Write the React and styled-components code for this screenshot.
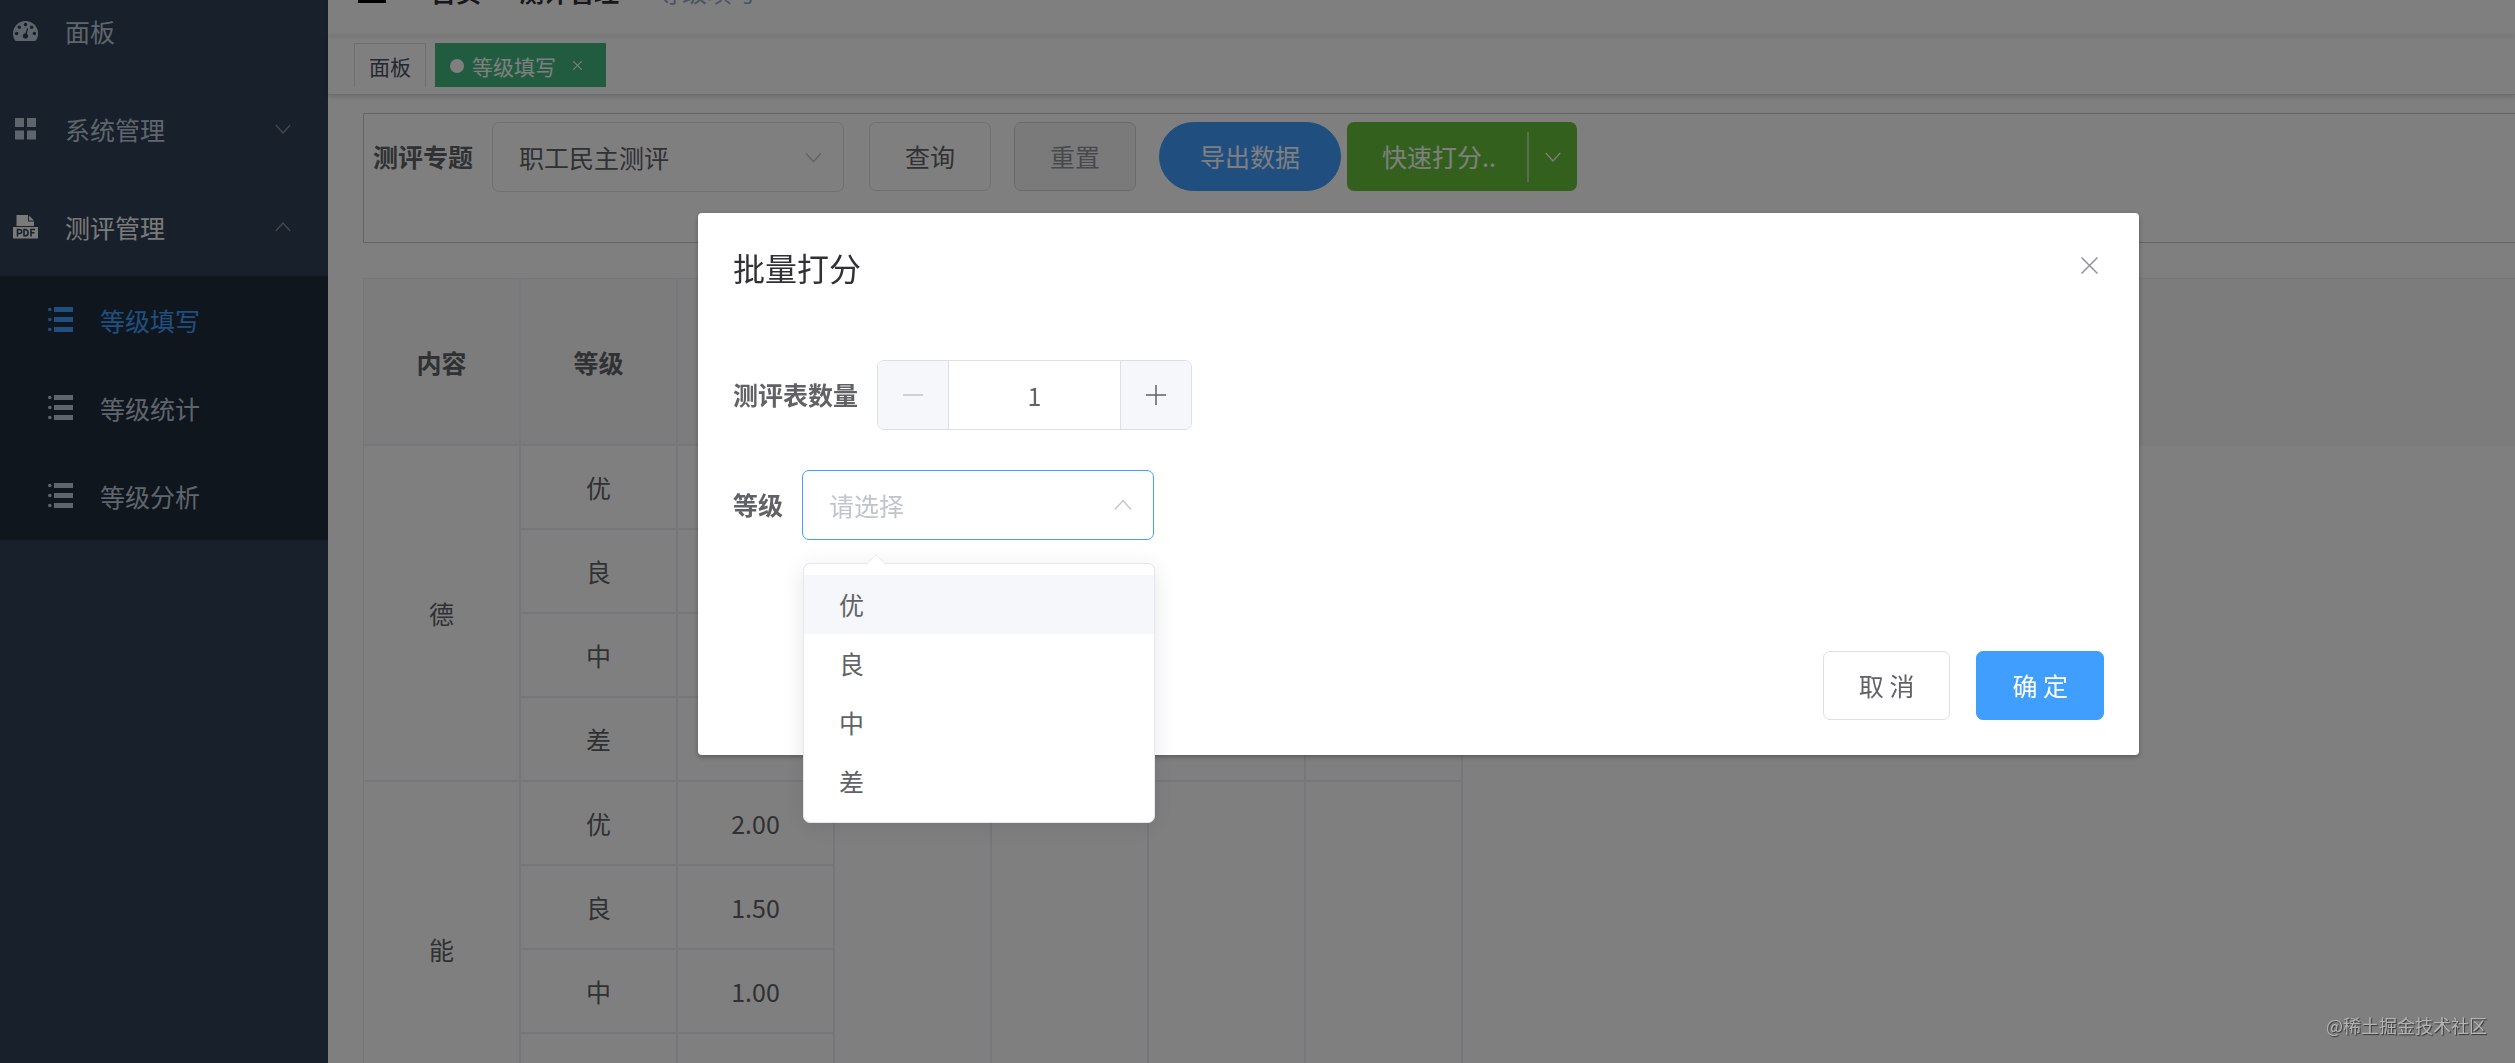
import React, { useState } from "react";
import styled, { createGlobalStyle } from "styled-components";

const GlobalStyle = createGlobalStyle`
  * {
    box-sizing: border-box;
  }
  body {
    margin: 0;
    overflow: hidden;
    color: #606266;
    background-color: #fff;
  }
  body, button, input, select {
    font-family: "Noto Sans CJK SC", sans-serif;
    font-size: 25px;
  }
`;

const subMenus = ["等级填写", "等级统计", "等级分析"];
const levels = ["优", "良", "中", "差"];
const tableGroups = [
  { name: "德", scores: ["", "", "", ""] },
  { name: "能", scores: ["2.00", "1.50", "1.00", ""] },
];

const DashboardIcon = () => (
  <svg width="25" height="20" viewBox="0 0 25 20" fill="currentColor">
    <path
      fillRule="evenodd"
      d="M12.5 0A12.5 12.5 0 0 0 0 12.5c0 2.5.7 4.7 1.9 6.7.3.5.8.8 1.4.8h18.4c.6 0 1.1-.3 1.4-.8A12.5 12.5 0 0 0 12.5 0z
      M3.6 10.7a1.8 1.8 0 1 1 0 3.6a1.8 1.8 0 1 1 0-3.6z
      M6.3 4.5a1.8 1.8 0 1 1 0 3.6a1.8 1.8 0 1 1 0-3.6z
      M12.5 1.8a1.8 1.8 0 1 1 0 3.6a1.8 1.8 0 1 1 0-3.6z
      M18.7 4.5a1.8 1.8 0 1 1 0 3.6a1.8 1.8 0 1 1 0-3.6z
      M21.4 10.7a1.8 1.8 0 1 1 0 3.6a1.8 1.8 0 1 1 0-3.6z
      M14 7.2l1.2.3-1.3 5.2a2.7 2.7 0 1 1-1.4-.4z"
    />
  </svg>
);

const ComponentIcon = () => (
  <svg width="25" height="22" viewBox="0 0 25 22" fill="currentColor">
    <path d="M2 0h9v9H2zM14 0h9v9h-9zM2 12.5h9v9H2zM14 12.5h9v9h-9z" />
  </svg>
);

const PdfIcon = () => (
  <svg width="25" height="24" viewBox="0 0 25 24">
    <path fill="currentColor" d="M3.5 0H15v6.5h6V11H3.5zM16 .5l5 5h-5zM0 12h25v11.5H0z" />
    <path
      fill="none"
      stroke="#304156"
      strokeWidth="1.6"
      d="M4.5 21.5v-7h2.200a1.900 1.900 0 0 1 0 4H4.500M11 14.500v6.300h1.200c3.800 0 3.800-6.300 0-6.300zM18 21.500v-7h4M18 17.800h3.500"
    />
  </svg>
);

const ListIcon = () => (
  <svg width="25" height="26" viewBox="0 0 25 26" fill="currentColor">
    <path d="M6 0h19v5H6zM6 10h19v5H6zM6 20h19v5H6z" />
    <circle cx="1.8" cy="2.5" r="1.8" />
    <circle cx="1.8" cy="12.5" r="1.8" />
    <circle cx="1.8" cy="22.5" r="1.8" />
  </svg>
);

const Arrow = ({ up, size = 20 }) => (
  <svg width={size} height={size} viewBox="0 0 20 20" fill="none" stroke="currentColor" strokeWidth="1.5">
    <path d={up ? "M1 15l9-10 9 10" : "M1 5l9 10 9-10"} />
  </svg>
);

const Close = ({ size = 17, stroke = 1.5 }) => (
  <svg width={size} height={size} viewBox="0 0 17 17" fill="none" stroke="currentColor" strokeWidth={stroke}>
    <path d="M.5.5l16 16M16.5.5l-16 16" />
  </svg>
);

function Sidebar() {
  return (
    <Aside>
      <Menu>
        <MenuItem href="#dashboard">
          <DashboardIcon />
          <span>面板</span>
        </MenuItem>
        <MenuItem href="#system">
          <ComponentIcon />
          <span>系统管理</span>
          <MenuArrow><Arrow size={16} /></MenuArrow>
        </MenuItem>
        <MenuItem href="#review" $open>
          <PdfIcon />
          <span>测评管理</span>
          <MenuArrow><Arrow up size={16} /></MenuArrow>
        </MenuItem>
      </Menu>
      <SubMenu>
        {subMenus.map((v, i) => (
          <SubMenuItem href="#level" key={i} $active={i === 0}>
            <ListIcon />
            <span>{v}</span>
          </SubMenuItem>
        ))}
      </SubMenu>
    </Aside>
  );
}

function Header() {
  return (
    <>
      <Navbar>
        <svg width="28" height="24" viewBox="0 0 28 24" fill="#000">
          <path d="M0 0h28v3H0zM0 10h28v3H0zM0 21h28v3H0z" />
        </svg>
        <Breadcrumb>
          <a href="#home">首页</a>
          <a href="#review">测评管理</a>
          <span>等级填写</span>
        </Breadcrumb>
      </Navbar>
      <TagsView>
        <Tag href="#dashboard">面板</Tag>
        <Tag href="#level" $active>
          <Dot />
          等级填写
          <TagClose><Close size={9} stroke={2} /></TagClose>
        </Tag>
      </TagsView>
    </>
  );
}

function Toolbar() {
  return (
    <FilterBox>
      <Label htmlFor="topic">测评专题</Label>
      <SelectWrap>
        <StyledSelect id="topic">
          <option>职工民主测评</option>
        </StyledSelect>
        <SelectArrow><Arrow size={17} /></SelectArrow>
      </SelectWrap>
      <Buttons>
        <Button>查询</Button>
        <Button $type="info">重置</Button>
        <ExportArea>
          <Button $type="primary" $round>导出数据</Button>
          <SplitButton>
            <SplitMain>快速打分..</SplitMain>
            <SplitToggle aria-label="更多"><Arrow size={16} /></SplitToggle>
          </SplitButton>
        </ExportArea>
      </Buttons>
    </FilterBox>
  );
}

function ScoreTable() {
  return (
    <TableWrap>
      <Table>
        <thead>
          <tr>
            <Th>内容</Th>
            <Th>等级</Th>
            <Th />
            <Th />
            <Th />
            <Th />
            <Th />
            <ThRest />
          </tr>
        </thead>
        <tbody>
          {tableGroups.map((group) =>
            levels.map((level, i) => (
              <tr key={group.name + level}>
                {i === 0 ? <Td rowSpan={4}>{group.name}</Td> : null}
                <Td>{level}</Td>
                <Td>{group.scores[i]}</Td>
                {i === 0 ? (
                  <>
                    <Td rowSpan={4} />
                    <Td rowSpan={4} />
                    <Td rowSpan={4} />
                    <Td rowSpan={4} />
                  </>
                ) : null}
              </tr>
            ))
          )}
        </tbody>
      </Table>
    </TableWrap>
  );
}

function ScoreDialog() {
  const [count, setCount] = useState(1);
  const [level, setLevel] = useState("");
  return (
    <Overlay>
      <Dialog role="dialog" aria-labelledby="dialog-title">
        <DialogHeader>
          <DialogTitle id="dialog-title">批量打分</DialogTitle>
          <CloseButton aria-label="关闭"><Close /></CloseButton>
        </DialogHeader>
        <DialogBody>
          <FormItem>
            <Label htmlFor="count">测评表数量</Label>
            <InputNumber>
              <StepButton aria-label="减少" disabled={count <= 1} onClick={() => setCount(count - 1)}>
                <svg width="20" height="20" viewBox="0 0 20 20" stroke="currentColor" strokeWidth="1.5">
                  <path d="M0 10h20" />
                </svg>
              </StepButton>
              <CountInput id="count" value={count} onChange={(e) => setCount(Number(e.target.value) || 1)} />
              <StepButton aria-label="增加" onClick={() => setCount(count + 1)}>
                <svg width="20" height="20" viewBox="0 0 20 20" stroke="currentColor" strokeWidth="1.5">
                  <path d="M0 10h20M10 0v20" />
                </svg>
              </StepButton>
            </InputNumber>
          </FormItem>
          <FormItem>
            <Label htmlFor="level">等级</Label>
            <SelectWrap>
              <StyledSelect id="level" value={level} onChange={(e) => setLevel(e.target.value)} $focus $empty={!level}>
                <option value="">请选择</option>
                {levels.map((v) => (
                  <option key={v}>{v}</option>
                ))}
              </StyledSelect>
              <SelectArrow><Arrow up size={18} /></SelectArrow>
              <Dropdown role="listbox">
                {levels.map((v, i) => (
                  <Option key={v} role="option" aria-selected={level === v} $hover={i === 0} onClick={() => setLevel(v)}>
                    {v}
                  </Option>
                ))}
              </Dropdown>
            </SelectWrap>
          </FormItem>
        </DialogBody>
        <DialogFooter>
          <Button>取 消</Button>
          <Button $type="primary">确 定</Button>
        </DialogFooter>
      </Dialog>
      <Watermark>@稀土掘金技术社区</Watermark>
    </Overlay>
  );
}

function App() {
  return (
    <>
      <GlobalStyle />
      <Layout>
        <Sidebar />
        <Main>
          <Header />
          <Content>
            <Toolbar />
            <ScoreTable />
          </Content>
        </Main>
      </Layout>
      <ScoreDialog />
    </>
  );
}

const Layout = styled.div`
  display: flex;
  height: 100vh;
  overflow: hidden;
`;

/* sidebar */
const Aside = styled.nav`
  width: 328px;
  flex-shrink: 0;
  background-color: #304156;
`;
const Menu = styled.div`
  margin-top: -18px;
`;
const MenuItem = styled.a`
  height: 98px;
  padding: 0 37px 0 13px;
  display: flex;
  align-items: center;
  gap: 27px;
  color: ${(props) => (props.$open ? "#f4f4f5" : "#bfcbd9")};
  text-decoration: none;
`;
const MenuArrow = styled.span`
  margin-left: auto;
  display: flex;
  color: #909399;
`;
const SubMenu = styled.div`
  background-color: #1f2d3d;
`;
const SubMenuItem = styled.a`
  height: 88px;
  padding-left: 48px;
  display: flex;
  align-items: center;
  gap: 27px;
  color: ${(props) => (props.$active ? "#409eff" : "#bfcbd9")};
  text-decoration: none;
`;

/* header */
const Main = styled.main`
  flex: 1;
  min-width: 0;
`;
const Navbar = styled.header`
  height: 90px;
  margin-top: -54px;
  padding: 0 30px;
  display: flex;
  align-items: center;
  gap: 45px;
  box-shadow: 0 1px 4px rgba(0, 21, 41, 0.08);
`;
const Breadcrumb = styled.div`
  display: flex;
  gap: 38px;
  color: #97a8be;

  & > a {
    color: #303133;
    font-weight: bold;
    text-decoration: none;
  }
`;
const TagsView = styled.div`
  height: 59px;
  padding: 7px 26px;
  display: flex;
  gap: 9px;
  border-bottom: 1px solid #d8dce5;
  box-shadow: 0 1px 5px rgba(0, 0, 0, 0.2);
`;
const Tag = styled.a`
  height: 44px;
  padding: 0 14px;
  display: flex;
  align-items: center;
  gap: 8px;
  font-size: 21px;
  text-decoration: none;
  color: ${(props) => (props.$active ? "#fff" : "#495060")};
  background-color: ${(props) => (props.$active ? "#42b983" : "#fff")};
  border: 1px solid ${(props) => (props.$active ? "#42b983" : "#d8dce5")};
  border-bottom: none;
`;
const Dot = styled.span`
  width: 14px;
  height: 14px;
  border-radius: 50%;
  background-color: #fff;
`;
const TagClose = styled.span`
  width: 27px;
  display: flex;
  justify-content: center;
`;

/* content */
const Content = styled.div`
  padding: 18px 0 0 35px;
`;
const FilterBox = styled.div`
  height: 130px;
  margin-bottom: 35px;
  padding: 8px 9px;
  display: flex;
  align-items: flex-start;
  gap: 19px;
  border: 1px solid #c8c8c8;
  border-right: none;
`;
const Label = styled.label`
  line-height: 68px;
  font-weight: bold;
  white-space: nowrap;
`;
const SelectWrap = styled.div`
  position: relative;
  width: 352px;
`;
const StyledSelect = styled.select`
  display: block;
  width: 100%;
  height: 70px;
  padding: 0 60px 0 26px;
  appearance: none;
  outline: none;
  color: ${(props) => (props.$empty ? "#c0c4cc" : "#606266")};
  background-color: #fff;
  border: 1px solid ${(props) => (props.$focus ? "#409eff" : "#dcdfe6")};
  border-radius: 7px;
`;
const SelectArrow = styled.span`
  position: absolute;
  top: 0;
  right: 22px;
  height: 70px;
  display: flex;
  align-items: center;
  color: #c0c4cc;
  pointer-events: none;
`;
const Buttons = styled.div`
  margin-left: 6px;
  display: flex;
  gap: 23px;
`;
const ExportArea = styled.div`
  display: flex;
  gap: 6px;
`;

const buttonTypes = {
  primary: { color: "#fff", bg: "#409eff", border: "#409eff" },
  info: { color: "#909399", bg: "#f4f4f5", border: "#d3d4d6" },
  plain: { color: "#606266", bg: "#fff", border: "#dcdfe6" },
};
const Button = styled.button`
  height: 69px;
  padding: 0 ${(props) => (props.$round ? 40 : 35)}px 2px;
  cursor: pointer;
  color: ${(props) => buttonTypes[props.$type || "plain"].color};
  background-color: ${(props) => buttonTypes[props.$type || "plain"].bg};
  border: 1px solid ${(props) => buttonTypes[props.$type || "plain"].border};
  border-radius: ${(props) => (props.$round ? 35 : 7)}px;
`;
const SplitButton = styled.div`
  display: flex;
  align-items: center;
  color: #fff;
  background-color: #67c23a;
  border-radius: 7px;
`;
const SplitMain = styled.button`
  height: 69px;
  padding: 0 31px 2px 35px;
  color: inherit;
  background: none;
  border: none;
`;
const SplitToggle = styled.button`
  width: 50px;
  height: 50px;
  padding: 0;
  display: flex;
  align-items: center;
  justify-content: center;
  color: inherit;
  background: none;
  border: none;
  border-left: 2px solid rgba(255, 255, 255, 0.5);
`;

/* table */
const TableWrap = styled.div`
  border-top: 1px solid #ebeef5;
  border-left: 1px solid #ebeef5;
`;
const Table = styled.table`
  width: 100%;
  table-layout: fixed;
  border-collapse: separate;
  border-spacing: 0;
`;
const Th = styled.th`
  width: 157px;
  height: 167px;
  padding: 0;
  background-color: #f8f8f9;
  border-right: 2px solid #ebeef5;
  border-bottom: 2px solid #ebeef5;
`;
const ThRest = styled.th`
  padding: 0;
  background-color: #f8f8f9;
`;
const Td = styled.td`
  height: 84px;
  padding: 0;
  text-align: center;
  border-right: 2px solid #ebeef5;
  border-bottom: 2px solid #ebeef5;
`;

/* dialog */
const Overlay = styled.div`
  position: fixed;
  inset: 0;
  padding: 213px 376px 0 698px;
  background-color: rgba(0, 0, 0, 0.5);
`;
const Dialog = styled.div`
  background-color: #fff;
  border-radius: 4px;
  box-shadow: 0 2px 5px rgba(0, 0, 0, 0.3);
`;
const DialogHeader = styled.div`
  padding: 35px 35px 20px;
  display: flex;
  justify-content: space-between;
`;
const DialogTitle = styled.div`
  font-size: 32px;
  line-height: 39px;
  color: #303133;
`;
const CloseButton = styled.button`
  height: 34px;
  padding: 0 6px;
  display: flex;
  align-items: center;
  color: #909399;
  background: none;
  border: none;
`;
const DialogBody = styled.div`
  padding: 53px 35px;
`;
const FormItem = styled.div`
  display: flex;
  gap: 19px;
  margin-bottom: 40px;
`;
const InputNumber = styled.div`
  width: 315px;
  height: 70px;
  display: flex;
  overflow: hidden;
  border: 1px solid #dcdfe6;
  border-radius: 7px;
`;
const StepButton = styled.button`
  width: 70px;
  flex-shrink: 0;
  padding: 0;
  display: flex;
  align-items: center;
  justify-content: center;
  color: #606266;
  background-color: #f5f7fa;
  border: none;

  &:disabled {
    color: #c0c4cc;
  }
`;
const CountInput = styled.input`
  flex: 1;
  min-width: 0;
  padding: 0;
  text-align: center;
  color: #606266;
  outline: none;
  border: 1px solid #dcdfe6;
  border-width: 0 1px;
`;
const Dropdown = styled.div`
  position: absolute;
  top: 93px;
  left: 1px;
  width: 100%;
  padding: 11px 0;
  background-color: #fff;
  border: 1px solid #e4e7ed;
  border-radius: 7px;
  box-shadow: 0 4px 21px rgba(0, 0, 0, 0.1);

  &::before {
    content: "";
    position: absolute;
    top: -7px;
    left: 65px;
    width: 13px;
    height: 13px;
    background-color: #fff;
    border: 1px solid #ebeef5;
    border-width: 1px 0 0 1px;
    transform: rotate(45deg);
  }
`;
const Option = styled.div`
  position: relative;
  height: 59px;
  padding: 0 35px;
  line-height: 59px;
  cursor: pointer;
  background-color: ${(props) => (props.$hover ? "#f5f7fa" : "#fff")};
`;
const DialogFooter = styled.div`
  padding: 18px 35px 35px;
  display: flex;
  justify-content: flex-end;
  gap: 26px;
`;
const Watermark = styled.div`
  position: absolute;
  right: 28px;
  bottom: 25px;
  font-size: 18px;
  color: #b4b4b4;
  text-shadow: 1px 1px 1px #333;
`;

export default App;
